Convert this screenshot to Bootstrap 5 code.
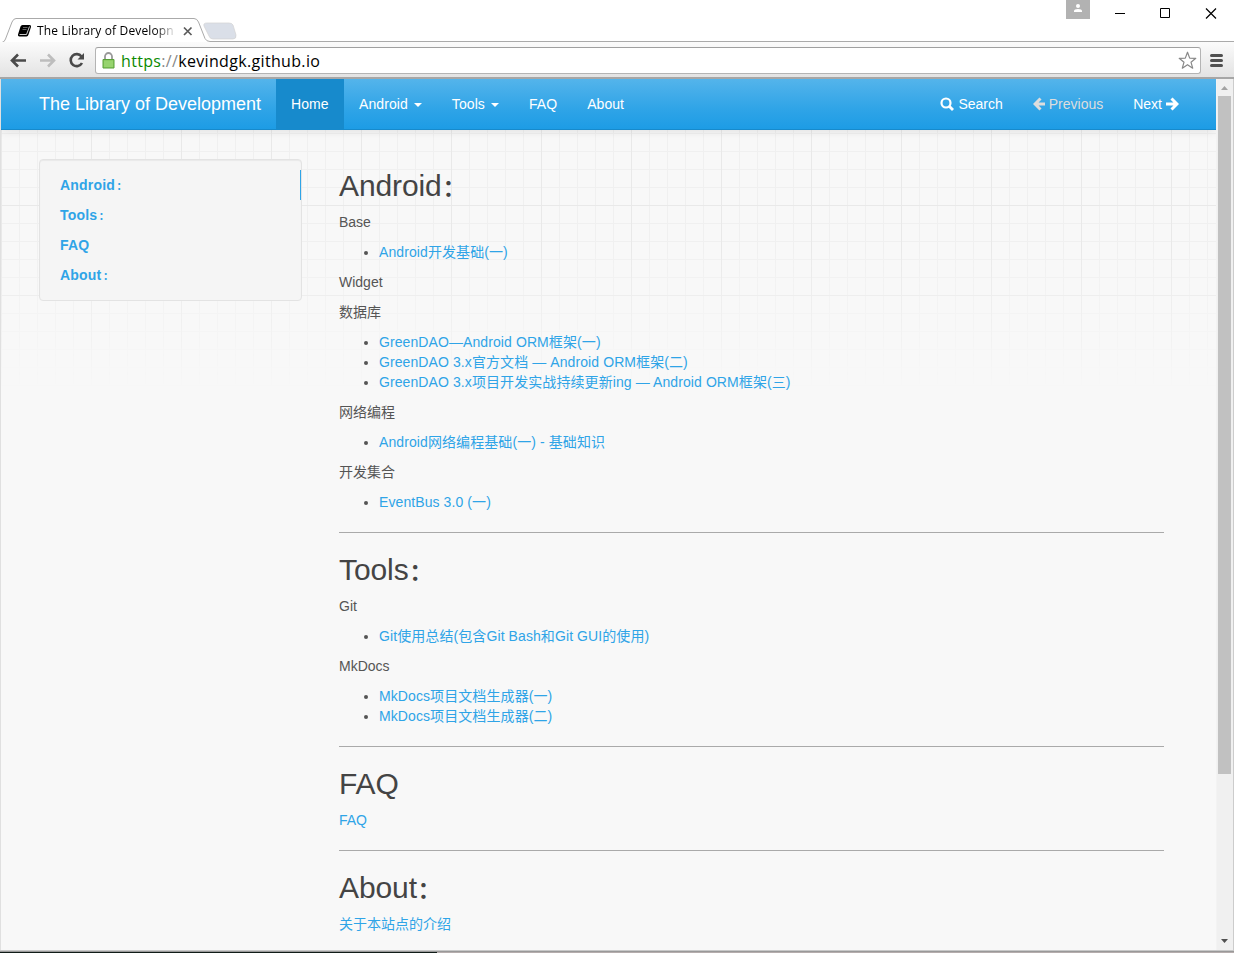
<!DOCTYPE html>
<html lang="zh-CN">
<head>
<meta charset="utf-8">
<title>The Library of Development</title>
<link href="https://cdn.jsdelivr.net/npm/bootstrap@5.3.0/dist/css/bootstrap.min.css" rel="stylesheet">
<style>
html,body{height:953px;overflow:hidden}
body{font:14px/20px "Liberation Sans","Noto Sans CJK SC",sans-serif;color:#555;background:#fff}
svg{display:block;flex:none}
a{color:#2fa4e7;text-decoration:none}
.titlebar{height:42px}
.tabshape{left:0;top:17px}
.tab-title{left:37px;top:22px;height:18px;white-space:nowrap;font:12px/18px "Open Sans","Noto Sans",sans-serif;color:#000;letter-spacing:.14px;-webkit-mask:linear-gradient(90deg,#000 118px,transparent 140px)}
.win-user{left:1066px;top:0}
.win-ctl{left:1110px;top:5px}
.toolbar{height:37px;background:linear-gradient(#fbfbfb,#e3e3e3);border-bottom:2px solid #a6a6a6;padding:5px 10px 3px 10px}
.omnibox{height:27px;background:#fff;border:1px solid #b4b4b4;border-top-color:#a0a0a0;border-radius:3px;margin-left:9px;padding:0 3px 0 6px;font:16px/25px "Open Sans","Noto Sans",sans-serif;color:#000}
.url{padding-left:6px;padding-top:2px;letter-spacing:.33px}
.viewport{height:871px;border-left:1px solid #e0e0e0}
.page{width:1215px;background:#f8f8f8;height:871px;overflow:hidden;position:relative}
.gridbg{left:0;top:0;width:1215px;height:310px;
 background:linear-gradient(90deg,#e9e9e9 1px,transparent 1px) 0 0/90px 90px,linear-gradient(#e9e9e9 1px,transparent 1px) 0 36px/90px 90px,linear-gradient(90deg,#f0f0f0 1px,transparent 1px) 0 0/18px 18px,linear-gradient(#f0f0f0 1px,transparent 1px) 0 0/18px 18px;
 -webkit-mask:linear-gradient(#000 55%,transparent 100%)}
.topnav{height:51px;background:linear-gradient(#54b4eb,#2fa4e7 60%,#1d9ce5);border-bottom:1px solid #178acc;box-shadow:0 1px 10px rgba(0,0,0,.1);padding:0 22px 0 23px;position:relative}
.topnav a{color:#fff;padding:15px;height:50px;white-space:nowrap}
.topnav .brandname{font-size:18px}
.topnav .current{background:#178acc;width:68px}
.topnav .menu-item{letter-spacing:.07px}
.topnav .off{color:#ddd}
.arrow{border:4px solid transparent;border-top-color:#fff;border-bottom:0;margin-left:6px;margin-top:2px}
.body-row{padding:29px 0 0 38px;position:relative}
.toc{width:263px;height:142px;background:#f5f5f5;border:1px solid #e3e3e3;border-radius:4px;box-shadow:inset 0 1px 1px rgba(0,0,0,.05);padding:10px 0}
.toc a{display:block;font-weight:700;padding:5px 20px;height:30px;letter-spacing:.2px}
.toc a.on{border-right:1px solid #2fa4e7}
.cn-colon{font-size:.76em;margin-left:.04em;line-height:1;font-weight:700}
.toc .cn-colon{margin-left:.14em}
.main-col{width:825px;margin-left:37px;padding-top:10px}
.main-col h1{font-size:30px;line-height:33px;height:33px;font-weight:400;color:#444;margin:0 0 10px;letter-spacing:-.1px}
.main-col p{margin:0 0 10px}
.main-col ul{margin:0 0 10px;padding-left:40px}
.main-col li a{letter-spacing:.09px}
.main-col hr{margin:20px 0;border:0;border-top:1px solid #aaa;opacity:1}
.sbar{width:17px;background:#f0f0f0;border-left:1px solid #f3f3f3;padding:0 2px 0 1px}
.thumb{width:13px;height:678px;background:#c1c1c1}
.edge{width:1px;background:#ccc}
.foot1{height:1px;background:#c8c8c8}
.foot2{height:1px;background:#999}
.foot3{height:1px;background:linear-gradient(90deg,#101c18 437px,#b5adad 437px)}
</style>
</head>
<body class="d-flex flex-column">
<div class="titlebar position-relative">
 <svg class="tabshape position-absolute" width="1234" height="25">
  <path d="M0 25.500H2Q4.500 25 5.500 22L12 5Q13.500 1.500 16 1.500H194Q197 1.500 198.500 5L205 21.500Q206.500 24.500 210 24.500H1234" fill="none" stroke="#aaa"/>
  <path d="M207 6H229Q232 6 233 8L236 18Q236.500 22 233 22H213Q210 22 209 19L204 9Q203 6 207 6Z" fill="#dadfe8" stroke="#d2d2d2" stroke-width=".7"/>
  <path d="M184 10.500l7.500 7.500m0-7.500l-7.500 7.500" stroke="#5a5a5a" stroke-width="1.700"/>
  <path d="M22.500 8H29.500Q31.500 8 31 10L28.500 17.500Q28 19.500 26.500 19.500H19.500Q17.500 19.500 18 17.500L20.500 9.500Q21 8 22.500 8Z"/><path d="M19.500 17.500H26.500L29.500 9.500" fill="none" stroke="#fff" stroke-width=".8"/><path d="M23 10.500h4.500M22.500 12.500h4" stroke="#777" stroke-width=".8"/>
 </svg>
 <div class="tab-title position-absolute">The Library of Developn</div>
 <svg class="win-user position-absolute" width="24" height="19"><path d="M0 0h24v19H0z" fill="#b2b2b2"/><circle cx="12" cy="6" r="2" fill="#fff"/><path d="M8 12V11Q8 9 12 9T16 11V12Z" fill="#fff"/></svg>
 <svg class="win-ctl position-absolute" width="110" height="18" fill="none" stroke="#000"><path d="M5 8.500h10M50.500 3.500h9v9h-9z"/><path d="M96 3.500l10 10m0-10l-10 10" stroke-width="1.200"/></svg>
</div>
<div class="toolbar d-flex align-items-start">
 <svg width="76" height="28" fill="none" stroke-width="2.600"><path d="M2.500 13.500H16M8 7.500l-6 6 6 6" stroke="#4a4a4a"/><path d="M30 13.500H43.500M38 7.500l6 6-6 6" stroke="#bdbdbd"/><path d="M71.500 9.500A6 6 0 1 0 72 16" stroke="#4a4a4a"/><path d="M74 6v6.500h-6.500z" fill="#4a4a4a"/></svg>
 <div class="omnibox d-flex align-items-center flex-grow-1">
  <svg width="13" height="17"><path d="M3 8V4.500a3.500 3.500 0 0 1 7 0v3.500" fill="none" stroke="#999" stroke-width="1.800"/><path d="M1 7.500h11v8.500H1z" fill="#8ccc63" stroke="#59a038"/><path d="M2 10h9M2 12h9M2 14h9" stroke="#a2db7d"/></svg>
  <div class="url flex-grow-1"><span style="color:#0b8a00">https</span><span style="color:#888">://</span>kevindgk.github.io</div>
  <svg width="19" height="19"><path d="M9.500 1.200l2.200 5.900 6.100.2-4.800 3.900 1.700 6-5.200-3.500-5.200 3.500 1.700-6L1.200 7.300l6.100-.2z" fill="#fff" stroke="#888" stroke-linejoin="round" stroke-width="1.200"/></svg>
 </div>
 <svg class="ms-2" width="15" height="26"><path d="M2.500 8.500h10M2.500 13.500h10M2.500 18.500h10" stroke="#505050" stroke-width="3" stroke-linecap="round"/></svg>
</div>
<div class="viewport d-flex">
 <div class="page">
  <div class="gridbg position-absolute"></div>
  <nav class="topnav d-flex">
   <a class="brandname" href="#">The Library of Development</a>
   <a class="current" href="#">Home</a>
   <a class="menu-item d-flex align-items-center" href="#">Android<span class="arrow"></span></a>
   <a class="menu-item d-flex align-items-center" href="#">Tools<span class="arrow"></span></a>
   <a class="menu-item" href="#">FAQ</a>
   <a class="menu-item" href="#">About</a>
   <a class="ms-auto d-flex align-items-center" href="#"><svg class="me-1" width="14" height="14" fill="none" stroke="#fff"><circle cx="6" cy="6" r="4.500" stroke-width="2.200"/><path d="M9 9l4 4" stroke-width="2.800"/></svg>Search</a>
   <a class="off d-flex align-items-center" href="#"><svg class="me-1" width="12" height="14" fill="none" stroke="#ddd" stroke-width="3"><path d="M12 7H2M7.500 1.500L2 7l5.500 5.500"/></svg>Previous</a>
   <a class="d-flex align-items-center" href="#">Next<svg style="margin-left:4px" width="13" height="14" fill="none" stroke="#fff" stroke-width="3"><path d="M0 7h10.500M5.500 1.500L11 7l-5.500 5.500"/></svg></a>
  </nav>
  <div class="body-row d-flex align-items-start">
   <div class="toc">
    <a class="on" href="#a">Android<span class="cn-colon">：</span></a><a href="#t">Tools<span class="cn-colon">：</span></a><a href="#f">FAQ</a><a href="#b">About<span class="cn-colon">：</span></a>
   </div>
   <main class="main-col">
    <h1 id="a">Android<span class="cn-colon">：</span></h1>
    <p>Base</p>
    <ul><li><a href="#">Android开发基础(一)</a></li></ul>
    <p>Widget</p>
    <p>数据库</p>
    <ul><li><a href="#">GreenDAO—Android ORM框架(一)</a></li><li><a href="#">GreenDAO 3.x官方文档 — Android ORM框架(二)</a></li><li><a href="#">GreenDAO 3.x项目开发实战持续更新ing — Android ORM框架(三)</a></li></ul>
    <p>网络编程</p>
    <ul><li><a href="#">Android网络编程基础(一) - 基础知识</a></li></ul>
    <p>开发集合</p>
    <ul><li><a href="#">EventBus 3.0 (一)</a></li></ul>
    <hr>
    <h1 id="t">Tools<span class="cn-colon">：</span></h1>
    <p>Git</p>
    <ul><li><a href="#">Git使用总结(包含Git Bash和Git GUI的使用)</a></li></ul>
    <p>MkDocs</p>
    <ul><li><a href="#">MkDocs项目文档生成器(一)</a></li><li><a href="#">MkDocs项目文档生成器(二)</a></li></ul>
    <hr>
    <h1 id="f">FAQ</h1>
    <p><a href="#">FAQ</a></p>
    <hr>
    <h1 id="b">About<span class="cn-colon">：</span></h1>
    <p><a href="#">关于本站点的介绍</a></p>
   </main>
  </div>
 </div>
 <div class="sbar d-flex flex-column">
  <svg width="13" height="17"><path d="M3 11h7L6.500 7z" fill="#a3a3a3"/></svg>
  <div class="thumb"></div>
  <svg class="mt-auto" width="13" height="17"><path d="M3 6h7L6.500 10z" fill="#505050"/></svg>
 </div>
 <div class="edge"></div>
</div>
<div class="foot1"></div><div class="foot2"></div><div class="foot3"></div>
<script src="https://cdn.jsdelivr.net/npm/bootstrap@5.3.0/dist/js/bootstrap.bundle.min.js"></script>
</body>
</html>
